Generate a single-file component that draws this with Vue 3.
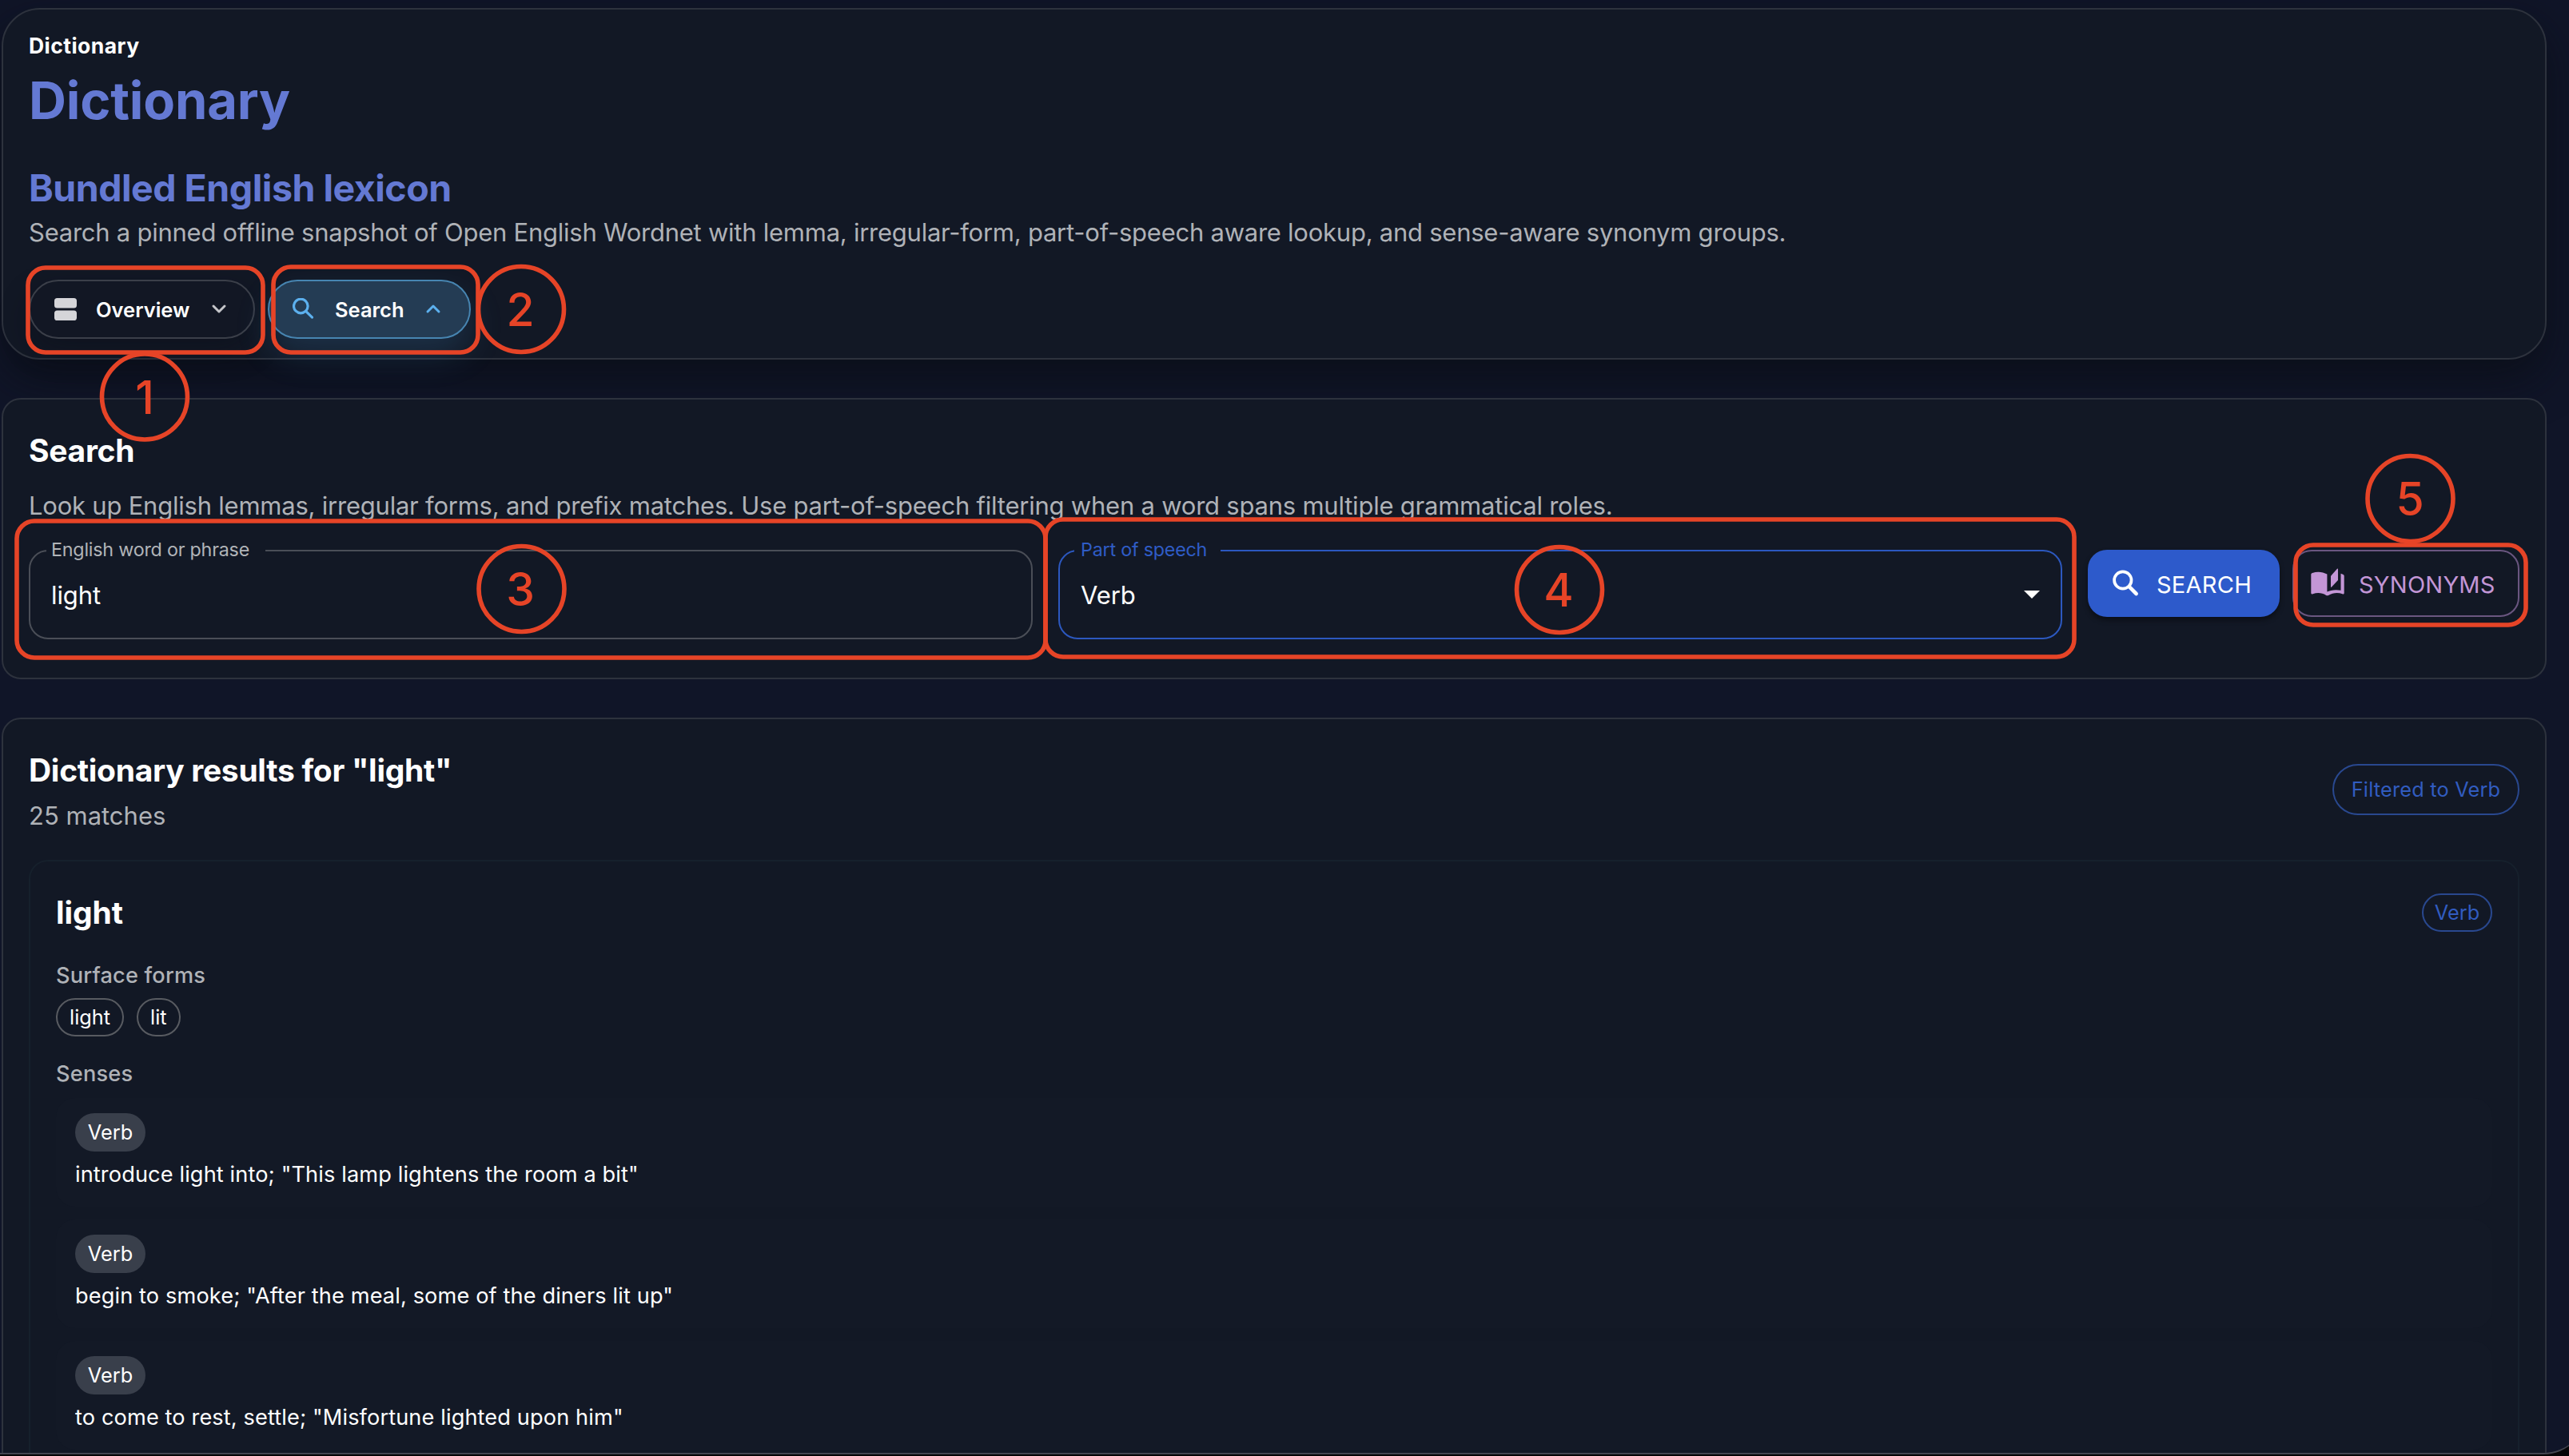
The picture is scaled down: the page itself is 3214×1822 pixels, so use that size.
<script setup>
import { ref, computed } from 'vue'

// ==========================================
// Search state
// ==========================================
const query = ref('light')
const partOfSpeech = ref('Verb')
const matchCount = ref(25)

const resultsTitle = computed(() => `Dictionary results for "${query.value}"`)

const surfaceForms = ['light', 'lit']

const senses = [
  { id: 1, pos: 'Verb', text: 'introduce light into; "This lamp lightens the room a bit"' },
  { id: 2, pos: 'Verb', text: 'begin to smoke; "After the meal, some of the diners lit up"' },
  { id: 3, pos: 'Verb', text: 'to come to rest, settle; "Misfortune lighted upon him"' }
]

// ==========================================
// Numbered callouts drawn over the page
// ==========================================
const callouts = [
  { n: 1, x: 35, y: 335, w: 294, h: 106, cx: 181, cy: 496.5, tx: 181 },
  { n: 2, x: 342, y: 334, w: 256, h: 107, cx: 652, cy: 387, tx: 651 },
  { n: 3, x: 21, y: 652, w: 1287, h: 171, cx: 652.5, cy: 737, tx: 651 },
  { n: 4, x: 1308, y: 650, w: 1287, h: 172, cx: 1951, cy: 738, tx: 1950 },
  { n: 5, x: 2872, y: 682, w: 288, h: 100, cx: 3015.5, cy: 624, tx: 3015 }
]
</script>

<template>
  <div class="page">
    <div class="window">
      <header class="card hero">
        <div class="eyebrow">Dictionary</div>
        <h1>Dictionary</h1>
        <h2>Bundled English lexicon</h2>
        <p class="lead">Search a pinned offline snapshot of Open English Wordnet with lemma, irregular-form, part-of-speech aware lookup, and sense-aware synonym groups.</p>
        <nav class="pills">
          <button class="pill">
            <svg class="pill-icon" width="28" height="28" viewBox="0 0 28 28" fill="#d5d5d9">
              <rect x="0" y="0" width="28" height="12.6" rx="3.6" />
              <rect x="0" y="15.4" width="28" height="12.6" rx="3.6" />
            </svg>
            <span class="overview-label">Overview</span>
            <svg class="chevron" width="20" height="14" viewBox="0 0 20 14" fill="none" stroke="#c4c5c9" stroke-width="3"
              stroke-linecap="round" stroke-linejoin="round">
              <path d="M3 3l7 7 7-7" />
            </svg>
          </button>
          <button class="pill active">
            <svg class="pill-icon" width="28" height="28" viewBox="0 0 28 28" fill="none" stroke="#5cb0ee" stroke-width="3.2"
              stroke-linecap="round">
              <circle cx="10.3" cy="10" r="8.8" />
              <path d="M16.8 16.6l7.7 7.5" />
            </svg>
            <span class="search-label">Search</span>
            <svg class="chevron" width="20" height="14" viewBox="0 0 20 14" fill="none" stroke="#5cb0ee" stroke-width="3"
              stroke-linecap="round" stroke-linejoin="round">
              <path d="M3 10l7-7 7 7" />
            </svg>
          </button>
        </nav>
      </header>

      <section class="card search">
        <h3 class="search-title">Search</h3>
        <p class="hint">Look up English lemmas, irregular forms, and prefix matches. Use part-of-speech filtering when a word spans multiple grammatical roles.</p>
        <div class="form-row">
          <label class="field">
            <span class="field-label">English word or phrase</span>
            <input v-model="query" type="text">
          </label>
          <div class="field focused">
            <span class="field-label">Part of speech</span>
            <span class="select-value">{{ partOfSpeech }}</span>
            <svg width="20" height="10" viewBox="0 0 20 10" fill="#fff">
              <path d="M0 0h20L10 10z" />
            </svg>
          </div>
          <div class="actions">
            <button class="btn primary">
              <svg width="34" height="34" viewBox="0 0 34 34" fill="none" stroke="#fff">
                <circle cx="13.8" cy="13" r="10.7" stroke-width="3.7" />
                <path d="M21.8 21.2l8.8 8.8" stroke-width="4.6" stroke-linecap="round" />
              </svg>
              <span class="btn-search">SEARCH</span>
            </button>
            <button class="btn outlined">
              <svg width="42" height="35" viewBox="0 0 42 35" fill="#c396d6">
                <path d="M.3 8C.3 6.6 1 6.3 2 5.9 8 3.8 15 4.4 20.4 7.6V29.5C24.5 27.3 31.5 26.4 37.5 27.8V6.7C39 7.2 41.7 8 41.7 9.5V31C41.7 32.4 40.7 32.8 39.5 32.2 34 30 27.5 30.6 22 33.9Q20.6 34.8 19.2 33.9C14 30.6 8 30.3 2.5 32.2 1 32.8.3 32 .3 31Z" />
                <path d="M25 9.8L33 .8Q34 .1 34 1.2V15L26 23.6Q25 24.4 25 23.2Z" />
              </svg>
              <span class="btn-synonyms">SYNONYMS</span>
            </button>
          </div>
        </div>
      </section>

      <section class="card results">
        <div class="results-head">
          <div>
            <h3 class="results-title">{{ resultsTitle }}</h3>
            <p class="matches">{{ matchCount }} matches</p>
          </div>
          <span class="chip filter">Filtered to {{ partOfSpeech }}</span>
        </div>

        <article class="entry">
          <div class="entry-head">
            <h3 class="lemma">{{ query }}</h3>
            <span class="chip pos">{{ partOfSpeech }}</span>
          </div>
          <div class="subhead surface">Surface forms</div>
          <div class="forms">
            <span v-for="form in surfaceForms" :key="form" class="chip form">{{ form }}</span>
          </div>
          <div class="subhead">Senses</div>
          <div class="senses">
            <div v-for="sense in senses" :key="sense.id" class="sense">
              <span class="chip filled">{{ sense.pos }}</span>
              <p>{{ sense.text }}</p>
            </div>
          </div>
        </article>
      </section>
    </div>

    <svg class="callouts" width="3214" height="1822" viewBox="0 0 3214 1822">
      <g v-for="c in callouts" :key="c.n">
        <rect :x="c.x" :y="c.y" :width="c.w" :height="c.h" rx="22" />
        <circle :cx="c.cx" :cy="c.cy" r="53.5" />
        <text :x="c.tx" :y="c.cy + 21">{{ c.n }}</text>
      </g>
    </svg>
  </div>
</template>

<style>
body {
  margin: 0;
  background: #000;
}
</style>

<style scoped>
* {
  box-sizing: border-box;
}

.page {
  position: relative;
  width: 3214px;
  height: 1822px;
  overflow: hidden;
  background: #050507;
  color: #fff;
  font-family: Inter, "Liberation Sans", sans-serif;
}

/* rounded app window, its right edge runs past the viewport */
.window {
  width: 3236px;
  height: 1820px;
  padding: 10px 50px 0 2px;
  border-bottom: 2px solid #434650;
  border-bottom-right-radius: 54px;
  overflow: hidden;
  background: #101528;
}

h1,
h2,
h3,
p {
  margin: 0;
  white-space: nowrap;
}

button {
  font-family: inherit;
  color: inherit;
  cursor: pointer;
}

.card {
  width: 3184px;
  border: 2px solid #2d323d;
  border-radius: 24px;
  background: #121825;
}

/* ==========================================
   Hero
   ========================================== */
.hero {
  height: 440px;
  padding: 25px 32px 0;
  border-radius: 48px;
  box-shadow: 0 24px 56px rgba(8, 11, 16, 0.6);
}

.eyebrow {
  height: 49px;
  font-size: 26.5px;
  line-height: 40px;
  font-weight: 650;
  letter-spacing: 0.45px;
}

h1 {
  height: 121px;
  color: #6479d3;
  font-size: 65px;
  line-height: 80px;
  font-weight: 650;
  letter-spacing: -0.2px;
}

h2 {
  color: #6479d3;
  height: 60px;
  font-size: 46.5px;
  line-height: 56px;
  font-weight: 650;
  letter-spacing: -0.5px;
}

.lead,
.hint,
.matches {
  color: #afb2b7;
  font-size: 31px;
  line-height: 48px;
}

.lead {
  letter-spacing: -0.25px;
}

.hint {
  letter-spacing: -0.225px;
}

.pills {
  display: flex;
  gap: 16px;
  margin-top: 35px;
}

.pill {
  display: flex;
  align-items: center;
  height: 74px;
  width: 283px;
  padding: 0 0 0 30px;
  border: 2px solid #3b3f49;
  border-radius: 37px;
  background: #121724;
  box-shadow: 0 16px 36px rgba(10, 12, 22, 0.4);
  font-size: 25.5px;
  font-weight: 600;
}

.pill.active {
  width: 254px;
  border-color: #4785b1;
  background: #243c54;
  box-shadow: 0 20px 44px rgba(70, 150, 210, 0.2);
}

.pill-icon {
  margin-right: 24px;
}

.active .pill-icon {
  margin-left: -1px;
  margin-right: 25px;
}

.overview-label {
  width: 144px;
  text-align: left;
}

.search-label {
  width: 113px;
  text-align: left;
}

/* ==========================================
   Search form
   ========================================== */
.search {
  height: 352px;
  margin-top: 48px;
  padding: 34px 32px 0;
}

.search-title,
.results-title,
.lemma {
  font-size: 39px;
  line-height: 60px;
  font-weight: 650;
  letter-spacing: -0.3px;
}

.hint {
  margin-top: 15px;
}

.form-row {
  display: flex;
  align-items: flex-start;
  gap: 32px;
  margin-top: 31px;
}

.field {
  position: relative;
  display: flex;
  align-items: center;
  justify-content: space-between;
  width: 1256px;
  height: 112px;
  padding: 0 26px;
  border: 2px solid #4a4e57;
  border-radius: 24px;
  font-size: 31px;
  letter-spacing: -0.1px;
}

.field.focused {
  border-color: #2c58bf;
}

.field-label {
  position: absolute;
  top: -16px;
  left: 20px;
  padding: 0 20px 0 6px;
  background: #121825;
  color: #b1b4b8;
  font-size: 23.3px;
  line-height: 28px;
  letter-spacing: -0.22px;
  white-space: nowrap;
}

.focused .field-label {
  left: 18px;
  padding: 0 17px 0 8px;
  color: #2f5cc6;
}

.field input {
  width: 100%;
  padding: 0;
  border: none;
  outline: none;
  background: transparent;
  color: #fff;
  font: inherit;
  letter-spacing: inherit;
}

.actions {
  display: flex;
  gap: 16px;
}

.btn {
  display: flex;
  align-items: center;
  height: 84px;
  border-radius: 24px;
  font-size: 29px;
  font-weight: 430;
  letter-spacing: 0.25px;
}

.btn span {
  padding-top: 2px;
}

.btn.primary {
  width: 240px;
  padding: 0 0 0 30px;
  border: none;
  background: #2d5acb;
  box-shadow: 0 4px 6px rgba(0, 0, 0, 0.4);
}

.btn.primary span {
  margin-left: 22px;
}

.btn.outlined {
  width: 284px;
  padding: 0 0 0 21px;
  border: 2px solid #6a5680;
  background: transparent;
  color: #c396d6;
}

.btn.outlined svg {
  margin-bottom: 4px;
}

.btn.outlined span {
  margin-left: 18px;
}

/* ==========================================
   Results
   ========================================== */
.results {
  height: 1100px;
  margin-top: 48px;
  padding: 34px 32px 0;
}

.results-head {
  display: flex;
  justify-content: space-between;
}

.matches {
  margin-top: 3px;
}

.chip {
  display: inline-flex;
  align-items: center;
  justify-content: center;
  height: 48px;
  padding-bottom: 1px;
  border: 2px solid #585b61;
  border-radius: 32px;
  font-size: 25.3px;
  white-space: nowrap;
}

.chip.filter {
  width: 234px;
  height: 64px;
  margin-top: 22px;
  letter-spacing: 0.2px;
}

.chip.filter,
.chip.pos {
  border-color: #29488f;
  color: #315cc0;
}

.entry {
  height: 900px;
  margin-top: 31px;
  padding: 32px;
  border: 2px solid #16202c;
  border-radius: 24px;
}

.entry-head {
  display: flex;
  justify-content: space-between;
  align-items: flex-start;
}

.chip.pos {
  width: 88px;
  margin-top: 8px;
}

.lemma {
  margin-top: 2px;
  letter-spacing: -0.1px;
}

.subhead {
  color: #afb2b7;
  font-size: 27.2px;
  line-height: 44px;
  font-weight: 450;
  letter-spacing: 0.18px;
}

.surface {
  margin-top: 27px;
}

.forms {
  display: flex;
  gap: 16px;
  margin: 6px 0 25px;
}

.chip.form {
  padding: 0 15px 1px;
}

.senses {
  display: flex;
  flex-direction: column;
  gap: 16px;
  margin-top: 8px;
}

.sense {
  height: 136px;
  padding: 19px 24px 0;
  border-radius: 24px;
  background: #131926;
}

.sense p {
  margin-top: 7px;
  font-size: 27.2px;
  line-height: 44px;
  letter-spacing: 0.11px;
}

.chip.filled {
  display: flex;
  width: 88px;
  border: none;
  background: #393f4b;
}

/* ==========================================
   Callouts
   ========================================== */
.callouts {
  position: absolute;
  top: 0;
  left: 0;
  pointer-events: none;
}

.callouts rect,
.callouts circle {
  fill: none;
  stroke: #e64427;
  stroke-width: 5.6;
}

.callouts text {
  fill: #e64427;
  font-size: 57px;
  font-weight: 450;
  text-anchor: middle;
}
</style>
